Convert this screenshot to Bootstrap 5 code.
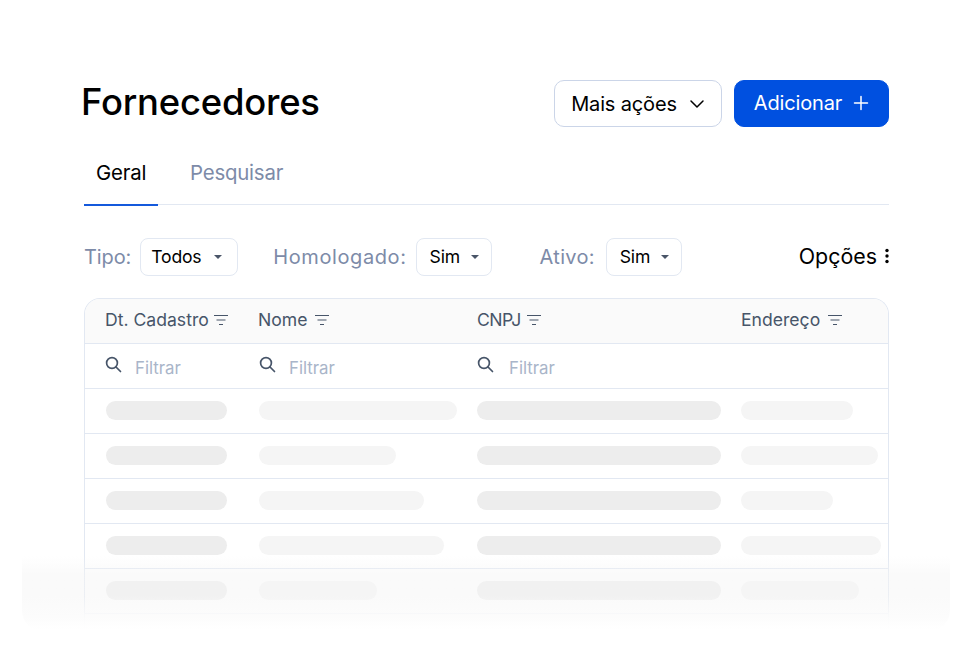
<!DOCTYPE html>
<html lang="pt-BR">
<head>
    <meta charset="UTF-8">
    <meta name="viewport" content="width=device-width, initial-scale=1.0">
    <title>Fornecedores</title>
    <link href="https://cdn.jsdelivr.net/npm/bootstrap@5.3.2/dist/css/bootstrap.min.css" rel="stylesheet">
    <style>
        html, body { height: 656px; overflow: hidden; background: #fff; }
        body { font-family: Inter, "Liberation Sans", sans-serif; color: #000; }
        .page-wrap { width: 805px; margin-left: 84px; padding-top: 80px; }
        .page-title { font-size: 36.4px; font-weight: 500; line-height: 47px; margin: -1px 0 1px -3px; letter-spacing: -.2px; }
        .btn-more, .btn-add { height: 47px; font-size: 20px; border-radius: 10px; display: flex; align-items: center; padding: 0; letter-spacing: -.15px; }
        .btn-more { width: 168px; justify-content: center; gap: 12px; background: #fff; border: 1px solid #cbd5e8; color: #000; }
        .btn-add { width: 155px; justify-content: center; gap: 11px; background: #0050e0; border: 1px solid #0050e0; color: #fff; padding-bottom: 2px; }
        .tab-bar { margin-top: 21px; border-bottom: 1px solid #e2e8f2; height: 57px; }
        .tab-item { font-size: 20.4px; line-height: 50px; height: 57px; letter-spacing: -.2px; color: #7d8ba8; text-decoration: none; padding: 0 12px; }
        .tab-item.on { color: #000; width: 74px; border-bottom: 2px solid #1459dc; height: 58px; margin-right: 20px; }
        .filter-bar { margin-top: 33px; height: 38px; }
        .filter-label { font-size: 20px; color: #7d8ba8; letter-spacing: -.1px; margin-right: 9px; }
        .label-wide { letter-spacing: .6px; }
        .label-ativo { letter-spacing: .3px; margin-right: 11px; }
        .filter-pick { height: 38px; background: #fff; border: 1px solid #e2e8f2; border-radius: 8px; font-size: 17.6px; display: flex; align-items: center; padding: 0 10px 0 10px; letter-spacing: -.2px; }
        .filter-pick::after { content: ""; margin-left: 13px; border-top: 4px solid #4a5568; border-left: 4px solid transparent; border-right: 4px solid transparent; }
        .pick-todos { width: 98px; margin-right: 35px; }
        .pick-sim { width: 76px; padding-left: 13px; }
        .pick-sim::after { margin-left: 11px; }
        .pick-homolog { margin-right: 48px; }
        .options-link { font-size: 21.4px; margin-left: auto; gap: 8px; margin-top: -2px; }
        .grid-box { margin-top: 22px; width: 805px; height: 330px; border: 1px solid #e2e8f2; border-bottom: 0; border-radius: 16px 16px 0 0; overflow: hidden; }
        .grid-row { display: grid; grid-template-columns: 174px 218px 264px 1fr; height: 45px; border-bottom: 1px solid #e2e8f2; align-items: center; }
        .grid-head { background: #fafafa; color: #475569; font-size: 17.6px; padding-bottom: 2px; }
        .head-cell { display: flex; align-items: center; gap: 7px; }
        .cell-first { padding-left: 20px; }
        .cell-first.head-cell { gap: 4px; }
        .head-shift { margin-left: -1px; }
        .head-tight { letter-spacing: -.5px; gap: 5px; }
        .filter-cell { display: flex; align-items: center; gap: 13px; color: #a9b5c9; font-size: 16.8px; padding-top: 5px; }
        .filter-cell svg { margin-top: -8px; }
        .filter-third { gap: 15px; }
        .bone-row { padding-bottom: 2px; }
        .bone { display: block; height: 19px; border-radius: 10px; background: #f5f5f5; }
        .bone.dark { background: #ededed; }
        .bone-first { margin-left: 21px; }
        .fade-cover { position: absolute; left: 22px; top: 556px; width: 928px; height: 76px; background: linear-gradient(to bottom, rgba(245,245,245,0) 0, rgba(245,245,245,.5) 18px, rgba(245,245,245,.5) 40px, rgba(252,252,252,.95) 62px, #fff 74px); border-radius: 0 0 22px 22px; }
    </style>
</head>
<body>
    <div class="page-wrap">
        <div class="d-flex justify-content-between align-items-center">
            <h1 class="page-title">Fornecedores</h1>
            <div class="d-flex gap-2">
                <button class="btn btn-more me-1" type="button">Mais ações
                    <svg width="16" height="16" viewBox="0 0 16 16" fill="none" stroke="#000" stroke-width="1.5" stroke-linecap="round" stroke-linejoin="round"><path d="M2 5l6 6 6-6"/></svg>
                </button>
                <button class="btn btn-add" type="button">Adicionar
                    <svg width="16" height="16" viewBox="0 0 16 16" fill="none" stroke="#fff" stroke-width="1.5" stroke-linecap="round"><path d="M8 1.5v13M1.5 8h13"/></svg>
                </button>
            </div>
        </div>

        <div class="tab-bar d-flex">
            <a class="tab-item on" href="#">Geral</a>
            <a class="tab-item" href="#">Pesquisar</a>
        </div>

        <div class="filter-bar d-flex align-items-center">
            <span class="filter-label">Tipo:</span>
            <div class="filter-pick pick-todos">Todos</div>
            <span class="filter-label label-wide">Homologado:</span>
            <div class="filter-pick pick-sim pick-homolog">Sim</div>
            <span class="filter-label label-ativo">Ativo:</span>
            <div class="filter-pick pick-sim">Sim</div>
            <div class="options-link d-flex align-items-center">Opções
                <svg width="4" height="16" viewBox="0 0 4 16" fill="#000"><circle cx="2" cy="2.5" r="1.7"/><circle cx="2" cy="8" r="1.7"/><circle cx="2" cy="13.5" r="1.7"/></svg>
            </div>
        </div>

        <div class="grid-box" id="gridBox">
            <div class="grid-row grid-head">
                <div class="head-cell cell-first">Dt. Cadastro <svg width="16" height="12" viewBox="0 0 16 12" fill="none" stroke="#475569" stroke-width="1.2"><path d="M1 1.5h14M3.5 6h9M6 10.5h4"/></svg></div>
                <div class="head-cell head-shift">Nome <svg width="16" height="12" viewBox="0 0 16 12" fill="none" stroke="#475569" stroke-width="1.2"><path d="M1 1.5h14M3.5 6h9M6 10.5h4"/></svg></div>
                <div class="head-cell head-tight">CNPJ <svg width="16" height="12" viewBox="0 0 16 12" fill="none" stroke="#475569" stroke-width="1.2"><path d="M1 1.5h14M3.5 6h9M6 10.5h4"/></svg></div>
                <div class="head-cell">Endereço <svg width="16" height="12" viewBox="0 0 16 12" fill="none" stroke="#475569" stroke-width="1.2"><path d="M1 1.5h14M3.5 6h9M6 10.5h4"/></svg></div>
            </div>
            <div class="grid-row">
                <div class="filter-cell cell-first"><svg width="17" height="17" viewBox="0 0 17 17" fill="none" stroke="#475569" stroke-width="1.7" stroke-linecap="round"><circle cx="7" cy="7" r="5.4"/><path d="M11 11l4.5 4.5"/></svg>Filtrar</div>
                <div class="filter-cell"><svg width="17" height="17" viewBox="0 0 17 17" fill="none" stroke="#475569" stroke-width="1.7" stroke-linecap="round"><circle cx="7" cy="7" r="5.4"/><path d="M11 11l4.5 4.5"/></svg>Filtrar</div>
                <div class="filter-cell filter-third"><svg width="17" height="17" viewBox="0 0 17 17" fill="none" stroke="#475569" stroke-width="1.7" stroke-linecap="round"><circle cx="7" cy="7" r="5.4"/><path d="M11 11l4.5 4.5"/></svg>Filtrar</div>
                <div></div>
            </div>
            <div id="boneRows"></div>
        </div>
    </div>
    <div class="fade-cover"></div>

    <script src="https://cdn.jsdelivr.net/npm/bootstrap@5.3.2/dist/js/bootstrap.bundle.min.js"></script>
    <script>
        // Placeholder rows: widths of the Nome and Endereco bones
        const rows = [[198, 112], [137, 137], [165, 92], [185, 140], [118, 118]];
        document.getElementById('boneRows').innerHTML = rows.map(([nome, end]) => `
            <div class="grid-row bone-row">
                <div><span class="bone dark bone-first" style="width:121px"></span></div>
                <div><span class="bone" style="width:${nome}px"></span></div>
                <div><span class="bone dark" style="width:244px"></span></div>
                <div><span class="bone" style="width:${end}px"></span></div>
            </div>`).join('');
    </script>
</body>
</html>
